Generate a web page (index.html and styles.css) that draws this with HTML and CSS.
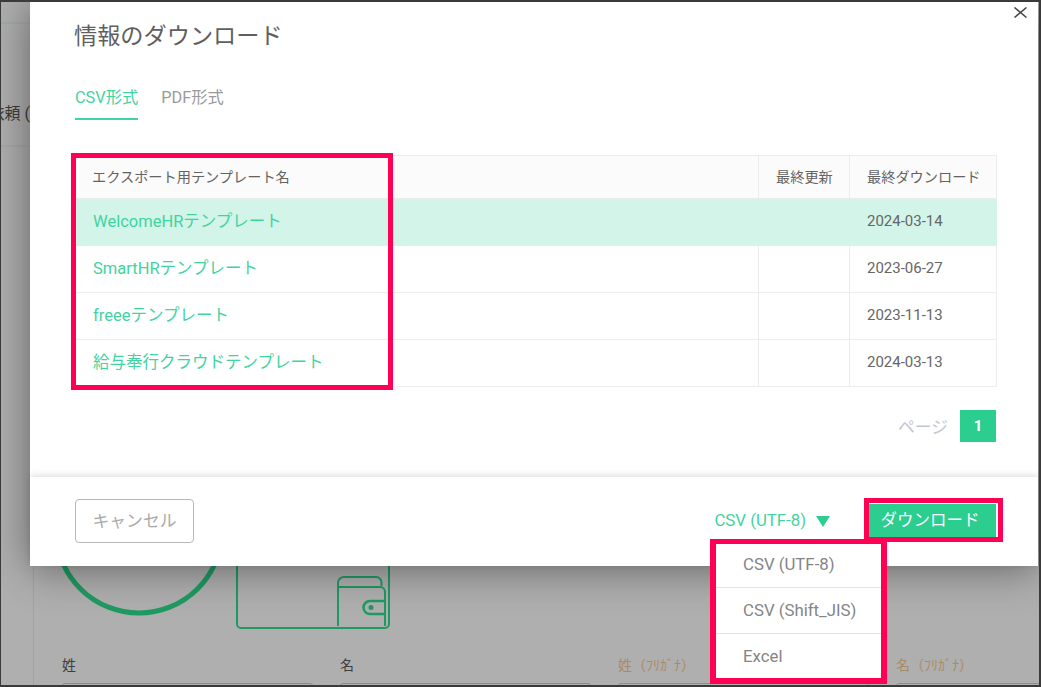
FILE: index.html
```html
<!DOCTYPE html>
<html lang="ja">
<head>
<meta charset="utf-8">
<title>情報のダウンロード</title>
<link rel="stylesheet" href="styles.css">
</head>
<body>
<div class="screen">
  <div class="backdrop">
    <div class="bg-band"></div>
    <div class="bg-side-text">依頼 (</div>
    <div class="bg-rule"></div>
    <svg class="bg-art" width="360" height="90" viewBox="0 0 360 90" fill="none">
      <circle cx="79" cy="-36" r="83" stroke="#1f9a62" stroke-width="5"/>
      <path d="M177 -10V58a4 4 0 0 0 4 4H325a4 4 0 0 0 4-4V-10" stroke="#1f9a62" stroke-width="2"/>
      <path d="M278 60V17a6 6 0 0 1 6-6H316a5.500 5.500 0 0 1 5.500 5.500V20" stroke="#1f9a62" stroke-width="2"/>
      <path d="M278 21H320a5 5 0 0 1 5 5V60" stroke="#1f9a62" stroke-width="2"/>
      <path d="M325 35H310a6.500 6.500 0 0 0 0 13H325" stroke="#1f9a62" stroke-width="2.500"/>
      <circle cx="311" cy="41.500" r="2.500" fill="#1f9a62"/>
    </svg>
    <div class="bg-fields">
      <div class="bg-field"><span class="bg-label">姓</span><span class="bg-input"></span></div>
      <div class="bg-field"><span class="bg-label">名</span><span class="bg-input"></span></div>
      <div class="bg-field bg-field-kana"><span class="bg-label">姓（ﾌﾘｶﾞﾅ）</span><span class="bg-input"></span></div>
      <div class="bg-field bg-field-kana"><span class="bg-label">名（ﾌﾘｶﾞﾅ）</span><span class="bg-input"></span></div>
    </div>
  </div>

  <section class="modal">
    <button class="close" aria-label="閉じる">
      <svg width="13" height="11" viewBox="0 0 13 11" fill="none"><path d="M.5.500l12 10M12.500.500l-12 10" stroke="#444" stroke-width="1.500"/></svg>
    </button>
    <div class="modal-body">
      <h1 class="title">情報のダウンロード</h1>
      <nav class="tabs">
        <a class="tab tab-active">CSV形式</a>
        <a class="tab">PDF形式</a>
      </nav>
      <table class="table">
        <thead>
          <tr><th class="col-name">エクスポート用テンプレート名</th><th class="col-upd">最終更新</th><th class="col-dl">最終ダウンロード</th></tr>
        </thead>
        <tbody>
          <tr class="row-selected"><td class="link">WelcomeHRテンプレート</td><td></td><td class="date">2024-03-14</td></tr>
          <tr><td class="link">SmartHRテンプレート</td><td></td><td class="date">2023-06-27</td></tr>
          <tr><td class="link">freeeテンプレート</td><td></td><td class="date">2023-11-13</td></tr>
          <tr><td class="link">給与奉行クラウドテンプレート</td><td></td><td class="date">2024-03-13</td></tr>
        </tbody>
      </table>
      <div class="pager"><span class="pager-label">ページ</span><span class="pager-num">1</span></div>
    </div>
    <footer class="modal-footer">
      <button class="btn-cancel">キャンセル</button>
      <div class="footer-right">
        <span class="format">CSV (UTF-8)<i class="caret"></i></span>
        <button class="btn-download">ダウンロード</button>
      </div>
    </footer>
  </section>

  <ul class="menu">
    <li>CSV (UTF-8)</li>
    <li>CSV (Shift_JIS)</li>
    <li>Excel</li>
  </ul>
  <div class="mark mark-table"></div>
  <div class="mark mark-download"></div>
</div>
</body>
</html>
```

FILE: styles.css
```css
* { box-sizing: border-box; }
html, body { margin: 0; padding: 0; }
body {
  width: 1041px;
  height: 687px;
  overflow: hidden;
  font-family: Roboto, "Noto Sans CJK JP", sans-serif;
  background: #fff;
}
.screen {
  position: relative;
  width: 1041px;
  height: 687px;
  overflow: hidden;
  background: #afafaf;
}
.screen::after {
  content: "";
  position: absolute;
  inset: 0;
  border: solid #3a3a3a;
  border-width: 2px 2px 2px 1px;
  pointer-events: none;
}
.backdrop { position: absolute; inset: 0; }
.bg-band {
  position: absolute;
  left: 0; top: 22px;
  width: 40px; height: 125px;
  border-top: 2px solid #a4aca8;
  border-bottom: 2px solid #a4aca8;
}
.bg-side-text {
  position: absolute;
  right: 1011px; top: 103px;
  font-size: 16px;
  line-height: 22px;
  color: #3d3d3d;
  white-space: nowrap;
}
.bg-rule {
  position: absolute;
  left: 33px; top: 566px; bottom: 0;
  width: 1px;
  background: #a2a2a2;
}
.bg-art { position: absolute; left: 60px; top: 566px; overflow: hidden; }
.bg-fields {
  position: absolute;
  left: 62px; top: 656px;
  display: flex;
  gap: 27px;
}
.bg-field {
  width: 251px;
  display: flex;
  flex-direction: column;
  gap: 8px;
}
.bg-label {
  font-size: 14px;
  line-height: 19px;
  color: #3e3e3e;
}
.bg-input {
  height: 30px;
  border: 1px solid #8c8c8c;
  border-radius: 3px;
}
.bg-field-kana .bg-label { color: #a98a66; }
.bg-field-kana .bg-input { border-color: #a98a66; }

.modal {
  position: absolute;
  left: 30px; top: 2px;
  width: 1008px; height: 564px;
  background: #fff;
  display: flex;
  flex-direction: column;
  box-shadow: 0 2px 40px rgba(0, 0, 0, .45);
}
.close {
  position: absolute;
  right: 11px; top: 5px;
  padding: 0;
  border: 0;
  background: none;
  width: 13px; height: 11px;
  display: flex;
}
.modal-body {
  flex: 1;
  min-height: 0;
  padding: 18px 41px 0 45px;
}
.title {
  margin: 0 0 0 -1px;
  font-size: 23.200px;
  line-height: 32px;
  font-weight: 400;
  color: #5f5f5f;
}
.tabs {
  display: flex;
  gap: 23px;
  margin-top: 35px;
}
.tab {
  font-size: 16.300px;
  line-height: 22px;
  padding-bottom: 9px;
  color: #9a9a9a;
  border-bottom: 2px solid transparent;
}
.tab-active { color: #3fd4a0; border-bottom-color: #3fd4a0; }
.table {
  margin-top: 35px;
  width: 921px;
  border-collapse: collapse;
  table-layout: fixed;
}
.col-name { width: 683px; }
.col-upd { width: 91px; }
.col-dl { width: 147px; }
.table th, .table td {
  border: 1px solid #ececec;
  text-align: left;
  padding: 0 17px;
  font-weight: 400;
  white-space: nowrap;
}
.table th {
  height: 43px;
  padding-bottom: 3px;
  background: #fbfbfb;
  font-size: 14.200px;
  color: #636363;
}
.table th.col-name { padding-left: 16px; }
.table td { height: 47px; padding-bottom: 5px; }
.table .link { font-size: 16.500px; color: #3fd4a0; }
.table .date { font-size: 15px; color: #666; padding-bottom: 2px; }
.row-selected td { background: #d3f4e8; border-color: #d3f4e8; }
.row-selected td + td { border-left-color: #e4efea; }
.pager {
  display: flex;
  justify-content: flex-end;
  align-items: center;
  gap: 12px;
  margin-top: 23px;
  padding-right: 1px;
}
.pager-label { font-size: 16.800px; color: #c2c6d4; }
.pager-num {
  width: 36px; height: 32px;
  display: flex;
  align-items: center;
  justify-content: center;
  background: #2bce8f;
  color: #fff;
  font-size: 15px;
  font-weight: 700;
}
.modal-footer {
  height: 89px;
  display: flex;
  align-items: center;
  justify-content: space-between;
  padding: 0 41px 2px 45px;
  box-shadow: 0 -2px 6px rgba(0, 0, 0, .12);
  background: #fff;
}
.btn-cancel {
  width: 119px; height: 44px;
  padding: 0 0 2px;
  border: 1px solid #b8b8b8;
  border-radius: 4px;
  background: #fff;
  color: #aaa;
  font: 400 16.800px Roboto, "Noto Sans CJK JP", sans-serif;
}
.footer-right {
  display: flex;
  align-items: center;
  gap: 38px;
  margin-right: 1px;
}
.format {
  display: flex;
  align-items: center;
  gap: 10px;
  padding-bottom: 1px;
  font-size: 16.800px;
  color: #3fd4a0;
}
.caret {
  width: 0; height: 0;
  border-left: 7px solid transparent;
  border-right: 7px solid transparent;
  border-top: 11px solid #2bce8f;
  margin-top: 2px;
}
.btn-download {
  width: 128px; height: 34px;
  padding: 0 4px 3px 0;
  border: 0;
  background: #2bce8f;
  color: #fff;
  font: 400 16.500px Roboto, "Noto Sans CJK JP", sans-serif;
}
.menu {
  position: absolute;
  left: 710px; top: 539px;
  width: 177px; height: 145px;
  margin: 0;
  padding: 0;
  list-style: none;
  background: #fff;
  border: 6px solid #ff0055;
  border-top-width: 5px;
}
.menu li {
  height: 46px;
  padding: 0 0 2px 27px;
  display: flex;
  align-items: center;
  font-size: 16.800px;
  color: #858585;
  border-top: 1px solid #e4e4e4;
}
.menu li:first-child { border-top: 0; height: 43px; padding-bottom: 3px; }
.mark {
  position: absolute;
  border: 5px solid #ff0055;
  pointer-events: none;
}
.mark-table { left: 71px; top: 153px; width: 322px; height: 237px; }
.mark-download { left: 864px; top: 498px; width: 139px; height: 44px; }
```
